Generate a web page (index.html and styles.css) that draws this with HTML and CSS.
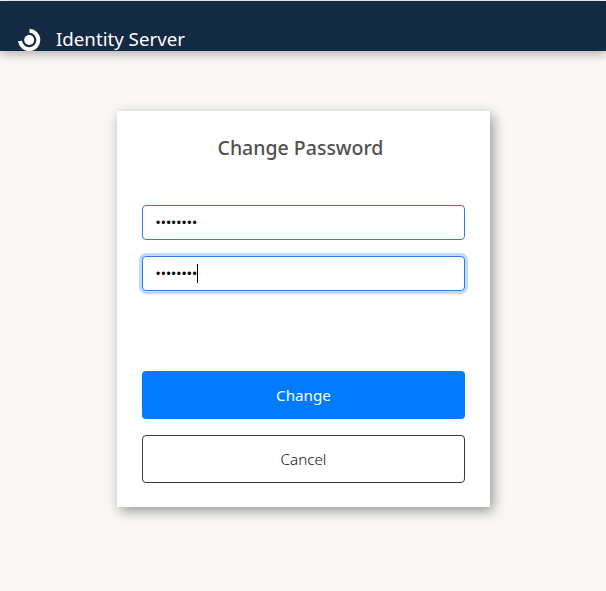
FILE: index.html
```html
<!DOCTYPE html>
<html lang="en">
<head>
    <meta charset="UTF-8">
    <meta name="viewport" content="width=device-width, initial-scale=1.0">
    <title>Change Password</title>
    <link rel="stylesheet" href="styles.css">
</head>
<body>

<header class="top-bar">
    <svg class="logo" width="24" height="30" viewBox="0 0 24 30">
        <circle cx="12.2" cy="12" r="5" fill="#fff"/>
        <path d="M12.5 2.8 A9.2 9.2 0 1 1 3 13" fill="none" stroke="#fff" stroke-width="4"/>
    </svg>
    <span class="brand">Identity Server</span>
</header>

<main class="page">
    <form class="card">
        <h1 class="card-title">Change Password</h1>
        <div class="fields">
            <input class="field" type="password" value="password">
            <div class="field-wrap">
                <input class="field field-focus" type="password" value="password">
                <span class="caret"></span>
            </div>
        </div>
        <div class="actions">
            <button class="btn btn-primary" type="button">Change</button>
            <button class="btn btn-outline" type="button">Cancel</button>
        </div>
    </form>
</main>

</body>
</html>
```

FILE: styles.css
```css
html, body {
    height: 100%;
}

body {
    margin: 0;
    padding-top: 1px;
    box-sizing: border-box;
    background-color: #f9f8f5;
    font-family: "Noto Sans", "Open Sans", sans-serif;
    color: #444;
    overflow: hidden;
}

.top-bar {
    display: flex;
    align-items: flex-start;
    height: 50px;
    padding: 27px 0 0 17px;
    box-sizing: border-box;
    background-color: #132a42;
    color: #fff;
    overflow: hidden;
    box-shadow: 0 3px 10px rgba(0, 0, 0, 0.3);
}

.logo {
    flex: none;
}

.brand {
    margin-left: 15px;
    font-size: 18.7px;
    line-height: 22px;
}

.page {
    padding: 60px 0 0 117px;
}

.card {
    width: 373px;
    height: 396px;
    padding: 22px 25px 24px;
    box-sizing: border-box;
    display: flex;
    flex-direction: column;
    background-color: #fff;
    box-shadow: 3px 4px 12px rgba(0, 0, 0, 0.4);
}

.card-title {
    margin: 0;
    padding-right: 6px;
    font-size: 19.5px;
    line-height: 30px;
    font-weight: 500;
    text-align: center;
    color: #505050;
}

.fields {
    display: flex;
    flex-direction: column;
    gap: 16px;
    margin-top: 42px;
}

.field-wrap {
    position: relative;
    display: flex;
}

.field {
    width: 100%;
    height: 35px;
    padding: 0 13px;
    box-sizing: border-box;
    border: 1px solid #2f7be8;
    border-radius: 4px;
    background-color: #fff;
    font-family: "Liberation Sans", sans-serif;
    font-size: 12px;
    letter-spacing: 1px;
    color: #000;
    outline: none;
}

.field-focus {
    box-shadow: 0 0 0 3px #bfdcfe;
}

.caret {
    position: absolute;
    left: 55px;
    top: 8px;
    width: 1px;
    height: 19px;
    background-color: #000;
}

.actions {
    display: flex;
    flex-direction: column;
    gap: 16px;
    margin-top: auto;
}

.btn {
    height: 48px;
    border-radius: 4px;
    font-family: "Noto Sans", "Open Sans", sans-serif;
    font-size: 15.2px;
    cursor: pointer;
}

.btn-primary {
    border: none;
    background-color: #007bff;
    color: #fff;
}

.btn-outline {
    border: 1px solid #343a40;
    background-color: #fff;
    color: #111;
    font-weight: 300;
}
```
